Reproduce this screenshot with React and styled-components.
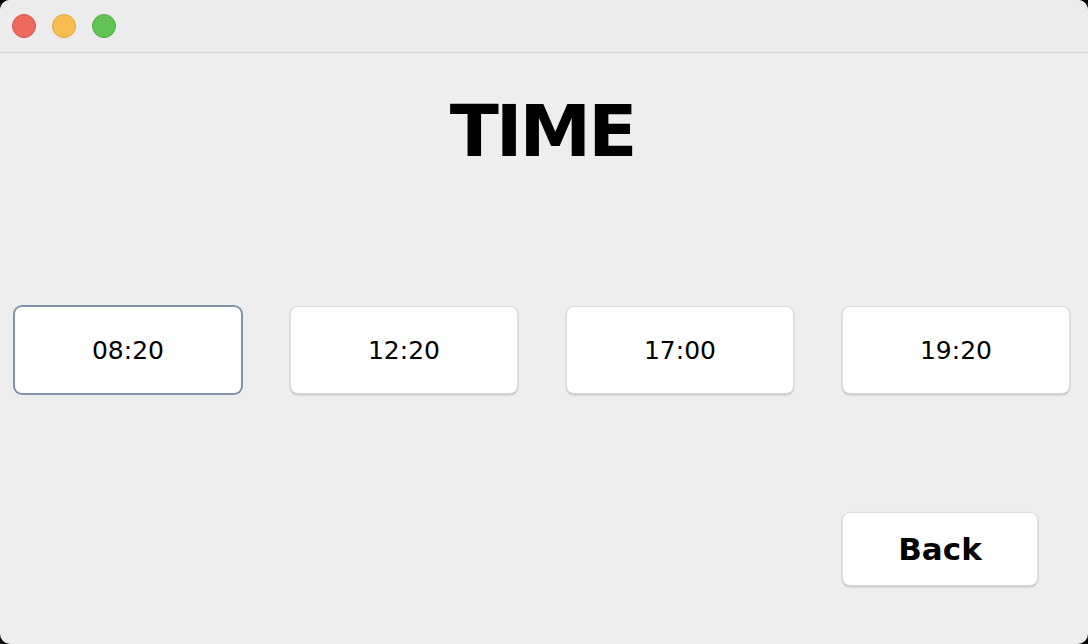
import React, { useState } from "react";
import styled, { createGlobalStyle } from "styled-components";

const GlobalStyle = createGlobalStyle`
  html, body {
    margin: 0;
    padding: 0;
    background: #000;
  }
  body {
    font-family: "DejaVu Sans", "Liberation Sans", sans-serif;
  }
`;

const Window = styled.div`
  width: 1088px;
  height: 644px;
  background: #eeeeee;
  border-radius: 10px;
  overflow: hidden;
  display: flex;
  flex-direction: column;
`;

const TitleBar = styled.div`
  height: 52px;
  flex-shrink: 0;
  background: #ececec;
  border-bottom: 1px solid #d2d2d2;
  display: flex;
  align-items: center;
  gap: 16px;
  padding-left: 12px;
`;

const Light = styled.span`
  width: 24px;
  height: 24px;
  border-radius: 50%;
  background: ${({ color }) => color};
  border: 1px solid ${({ edge }) => edge};
  box-sizing: border-box;
`;

const Content = styled.div`
  flex: 1;
  display: flex;
  flex-direction: column;
  padding: 0 18px 0 14px;
`;

const Title = styled.h1`
  margin: 42px 0 0;
  height: 72px;
  line-height: 72px;
  text-align: center;
  font-size: 72px;
  font-weight: 700;
  letter-spacing: -3px;
  color: #000;
`;

const TimeRow = styled.div`
  margin-top: 139px;
  display: flex;
  justify-content: space-between;
`;

const TimeButton = styled.button`
  width: 228px;
  height: 88px;
  box-sizing: border-box;
  background: #fff;
  border: 1px solid ${({ active }) => (active ? "#8194ab" : "#dcdcdc")};
  box-shadow: ${({ active }) =>
    active ? "0 0 0 1px #8194ab" : "0 1px 2px rgba(0, 0, 0, 0.22)"};
  border-radius: 8px;
  font-family: "DejaVu Sans", sans-serif;
  font-size: 25px;
  color: #000;
  padding: 0;
  cursor: pointer;
`;

const Footer = styled.div`
  margin-top: 118px;
  display: flex;
  justify-content: flex-end;
  padding-right: 32px;
`;

const BackButton = styled.button`
  width: 196px;
  height: 74px;
  box-sizing: border-box;
  background: #fff;
  border: 1px solid #dcdcdc;
  box-shadow: 0 1px 2px rgba(0, 0, 0, 0.22);
  border-radius: 8px;
  font-family: "DejaVu Sans", sans-serif;
  font-weight: 700;
  font-size: 31px;
  color: #000;
  padding: 0;
`;

const times = ["08:20", "12:20", "17:00", "19:20"];

const App = () => {
  const [selected, setSelected] = useState("08:20");

  return (
    <>
      <GlobalStyle />
      <Window>
        <TitleBar>
          <Light color="#ee6a5f" edge="#d9574d" />
          <Light color="#f6be50" edge="#dea63a" />
          <Light color="#61c454" edge="#4fac43" />
        </TitleBar>
        <Content>
          <Title>TIME</Title>
          <TimeRow>
            {times.map((t) => (
              <TimeButton
                key={t}
                active={selected === t}
                onClick={() => setSelected(t)}
              >
                {t}
              </TimeButton>
            ))}
          </TimeRow>
          <Footer>
            <BackButton>Back</BackButton>
          </Footer>
        </Content>
      </Window>
    </>
  );
};

export default App;
